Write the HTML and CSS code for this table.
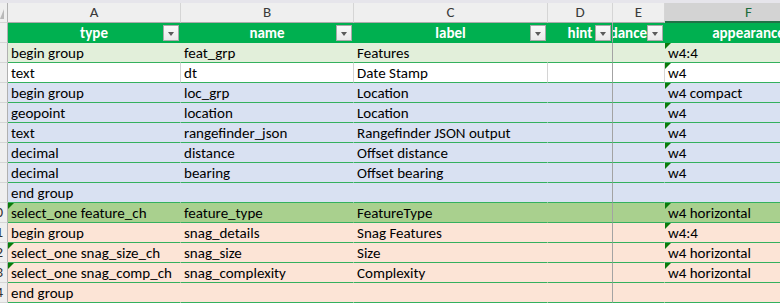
FILE: index.html
```html
<!DOCTYPE html>
<html>
<head>
<meta charset="utf-8">
<link rel="stylesheet" href="styles.css">
</head>
<body>
<div class="sheet">
  <div class="topstrip"></div>
  <div class="row letters">
    <div class="rh corner"><svg width="7" height="19" viewBox="0 0 7 19"><polygon points="0,16 4,16 4,6" fill="#b9b9b9"/></svg></div>
    <div class="c ca">A</div>
    <div class="c cb">B</div>
    <div class="c cc">C</div>
    <div class="c cd">D</div>
    <div class="c ce">E</div>
    <div class="c cf sel">F</div>
  </div>
  <div class="row hdr">
    <div class="rh"></div>
    <div class="c ca"><span>type</span><i class="fb"></i></div>
    <div class="c cb"><span>name</span><i class="fb"></i></div>
    <div class="c cc"><span>label</span><i class="fb"></i></div>
    <div class="c cd"><span>hint</span><i class="fb"></i></div>
    <div class="c ce"><span>guidance</span><i class="fb"></i></div>
    <div class="c cf"><span>appearance</span></div>
  </div>
  <div class="row lg">
    <div class="rh"></div>
    <div class="c ca">begin group</div><div class="c cb">feat_grp</div><div class="c cc">Features</div><div class="c cd"></div><div class="c ce"></div><div class="c cf tri">w4:4</div>
  </div>
  <div class="row wh">
    <div class="rh"></div>
    <div class="c ca">text</div><div class="c cb">dt</div><div class="c cc">Date Stamp</div><div class="c cd"></div><div class="c ce"></div><div class="c cf tri">w4</div>
  </div>
  <div class="row bl">
    <div class="rh"></div>
    <div class="c ca">begin group</div><div class="c cb">loc_grp</div><div class="c cc">Location</div><div class="c cd"></div><div class="c ce"></div><div class="c cf tri">w4 compact</div>
  </div>
  <div class="row bl">
    <div class="rh"></div>
    <div class="c ca">geopoint</div><div class="c cb">location</div><div class="c cc">Location</div><div class="c cd"></div><div class="c ce"></div><div class="c cf tri">w4</div>
  </div>
  <div class="row bl">
    <div class="rh"></div>
    <div class="c ca">text</div><div class="c cb">rangefinder_json</div><div class="c cc">Rangefinder JSON output</div><div class="c cd"></div><div class="c ce"></div><div class="c cf tri">w4</div>
  </div>
  <div class="row bl">
    <div class="rh"></div>
    <div class="c ca">decimal</div><div class="c cb">distance</div><div class="c cc">Offset distance</div><div class="c cd"></div><div class="c ce"></div><div class="c cf tri">w4</div>
  </div>
  <div class="row bl">
    <div class="rh"></div>
    <div class="c ca">decimal</div><div class="c cb">bearing</div><div class="c cc">Offset bearing</div><div class="c cd"></div><div class="c ce"></div><div class="c cf tri">w4</div>
  </div>
  <div class="row bl">
    <div class="rh"></div>
    <div class="c ca">end group</div><div class="c cb"></div><div class="c cc"></div><div class="c cd"></div><div class="c ce"></div><div class="c cf"></div>
  </div>
  <div class="row gr">
    <div class="rh"><span>10</span></div>
    <div class="c ca tri">select_one feature_ch</div><div class="c cb">feature_type</div><div class="c cc">FeatureType</div><div class="c cd"></div><div class="c ce"></div><div class="c cf tri">w4 horizontal</div>
  </div>
  <div class="row pe">
    <div class="rh"><span>11</span></div>
    <div class="c ca">begin group</div><div class="c cb">snag_details</div><div class="c cc">Snag Features</div><div class="c cd"></div><div class="c ce"></div><div class="c cf tri">w4:4</div>
  </div>
  <div class="row pe">
    <div class="rh"><span>12</span></div>
    <div class="c ca tri">select_one snag_size_ch</div><div class="c cb">snag_size</div><div class="c cc">Size</div><div class="c cd"></div><div class="c ce"></div><div class="c cf tri">w4 horizontal</div>
  </div>
  <div class="row pe">
    <div class="rh"><span>13</span></div>
    <div class="c ca tri">select_one snag_comp_ch</div><div class="c cb">snag_complexity</div><div class="c cc">Complexity</div><div class="c cd"></div><div class="c ce"></div><div class="c cf tri">w4 horizontal</div>
  </div>
  <div class="row pe">
    <div class="rh"><span>14</span></div>
    <div class="c ca">end group</div><div class="c cb"></div><div class="c cc"></div><div class="c cd"></div><div class="c ce"></div><div class="c cf"></div>
  </div>
</div>
</body>
</html>
```
FILE: styles.css
```css
html, body {
  margin: 0;
  padding: 0;
  background: #ffffff;
}
body {
  width: 780px;
  height: 304px;
  overflow: hidden;
  font-family: Carlito, Lato, "Open Sans", sans-serif;
  font-size: 15px;
  color: #000;
}
.sheet {
  width: 840px;
}
.topstrip {
  height: 3px;
  background: #e6e5eb;
}
.row {
  display: flex;
  height: 20px;
}
.rh {
  flex: none;
  width: 8px;
  box-sizing: border-box;
  border-right: 1px solid #b1b1b1;
  border-bottom: 1px solid #d6d6d6;
  background: #efefef;
  overflow: hidden;
  display: flex;
  line-height: 19px;
  color: #333;
}
.rh span {
  flex: none;
  width: 22px;
  margin-left: -19px;
  text-align: right;
}
.corner {
  align-items: stretch;
}
.corner svg {
  display: block;
}
.c {
  flex: none;
  box-sizing: border-box;
  border-right: 1px solid transparent;
  border-bottom: 1px solid #34b05e;
  overflow: hidden;
  white-space: nowrap;
  position: relative;
  line-height: 18px;
  padding-top: 1px;
  padding-left: 3px;
}
.ca { width: 173px; }
.cb { width: 173px; }
.cc { width: 194px; }
.cd { width: 65px; border-right-color: #a3a3a3 !important; }
.ce { width: 52px; }
.cf { width: 168px; }

/* column letters */
.letters .c {
  background: #efefef;
  border-right: 1px solid #d5d5d5;
  border-bottom: 1px solid #acacac;
  text-align: center;
  padding-left: 0;
  padding-top: 0;
  line-height: 19px;
  color: #3a3a3a;
}
.letters .cd { border-right-color: #d5d5d5 !important; }
.letters .sel {
  background: #d3d3d3;
  color: #1d6b3c;
  border-bottom: 2px solid #217346;
  line-height: 18px;
}

/* green table header */
.hdr .c {
  background: #00b050;
  border-bottom: 1px solid #00b050;
  color: #fff;
  font-weight: bold;
  padding-left: 0;
  padding-top: 0;
  display: flex;
  justify-content: center;
  line-height: 20px;
}
.hdr .c span {
  flex: none;
}
.hdr .ce {
  justify-content: flex-end;
  padding-right: 17px;
}
.fb {
  position: absolute;
  right: 1px;
  top: 2px;
  width: 16px;
  height: 16px;
  box-sizing: border-box;
  border: 1px solid #a9a9a9;
  background: linear-gradient(#fafafa, #e9e9e9);
}
.fb::after {
  content: "";
  position: absolute;
  left: 4px;
  top: 6px;
  border-left: 3.5px solid transparent;
  border-right: 3.5px solid transparent;
  border-top: 4px solid #5a5a5a;
}

/* row fills */
.lg .c { background: #e2efda; }
.wh .c { background: #ffffff; border-right-color: #d4d4d4; }
.bl .c { background: #d9e1f2; }
.gr .c { background: #a9d08e; }
.pe .c { background: #fce4d6; }

/* green error triangle */
.tri::before {
  content: "";
  position: absolute;
  left: 0;
  top: 0;
  border-top: 6px solid #0b7a0b;
  border-right: 6px solid transparent;
}
```
